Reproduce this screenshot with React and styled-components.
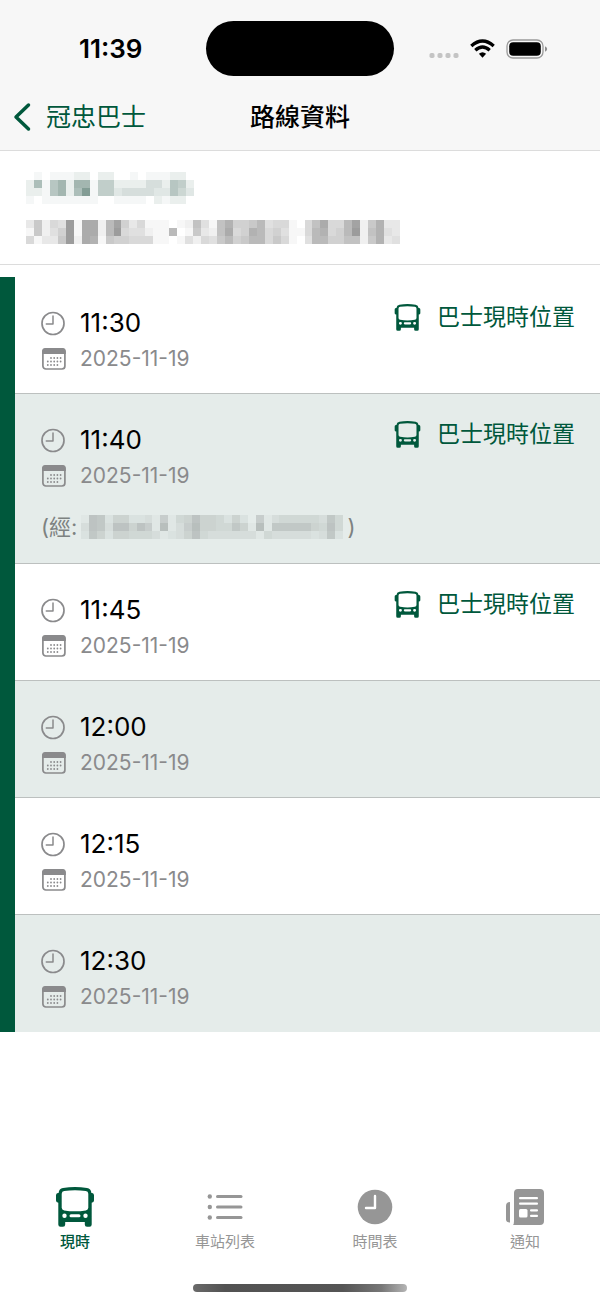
import React from "react";
import styled, { createGlobalStyle } from "styled-components";

const green = "#00583c";
const grey = "#8a8a8c";

const GlobalStyle = createGlobalStyle`
  *, *::before, *::after { box-sizing: border-box; }
  body {
    margin: 0;
    background: #fff;
    color: #000;
    font-family: Inter, "Noto Sans CJK TC", sans-serif;
  }
`;

const Page = styled.div`
  min-height: 100vh;
  display: flex;
  flex-direction: column;
`;

const Header = styled.header`
  background: #f7f7f7;
  border-bottom: 1px solid #dcdcdc;
`;

const StatusBar = styled.div`
  display: grid;
  grid-template-columns: 1fr auto 1fr;
  align-items: center;
  padding: 21px 52px 8px 79px;
`;

const Clock = styled.time`
  font-size: 26px;
  line-height: 30px;
  font-weight: 600;
`;

const Island = styled.div`
  width: 188px;
  height: 55px;
  border-radius: 28px;
  background: #000;
  margin-left: -27px;
`;

const Indicators = styled.div`
  display: flex;
  align-items: center;
  justify-content: flex-end;
  gap: 11px;
`;

const NavBar = styled.nav`
  display: grid;
  grid-template-columns: 1fr auto 1fr;
  align-items: center;
  padding: 0 13px;
  height: 66px;
`;

const BackLink = styled.a`
  display: flex;
  align-items: center;
  gap: 14px;
  color: ${green};
  font-size: 25px;
  line-height: 36px;
  text-decoration: none;
`;

const Title = styled.h1`
  margin: 0;
  font-size: 25px;
  line-height: 36px;
  font-weight: 500;
`;

const RouteSummary = styled.section`
  display: flex;
  flex-direction: column;
  gap: 16px;
  padding: 21px 26px 20px;
  border-bottom: 1px solid #dcdcdc;
`;

const MosaicSvg = styled.svg`
  display: block;
  width: ${(p) => p.$width}px;
  max-width: 100%;
  height: ${(p) => p.$height}px;
`;

const Main = styled.main`
  flex: 1;
`;

const Departures = styled.ul`
  list-style: none;
  margin: 12px 0 0;
  padding: 0;
  border-left: 15px solid ${green};
`;

const Departure = styled.li`
  display: flex;
  justify-content: space-between;
  align-items: flex-start;
  padding: 21px 25px 18px 26px;
  background: #fff;
  border-bottom: 1px solid #bcc0bf;

  &:nth-child(even) { background: #e5ecea; }
  &:last-child { border-bottom-color: transparent; }
`;

const Details = styled.div`
  display: flex;
  flex-direction: column;
`;

const Line = styled.div`
  display: flex;
  align-items: center;
  gap: 14px;
`;

const Time = styled.time`
  font-size: 26px;
  line-height: 40px;
  margin-top: 5px;
`;

const DateText = styled.time`
  font-size: 21px;
  line-height: 32px;
  color: ${grey};
`;

const TimeIcon = styled.svg`
  width: 25px;
  height: 25px;
  margin-top: 5px;
`;

const DateIcon = styled.svg`
  width: 25px;
  height: 25px;
`;

const Via = styled.p`
  display: flex;
  align-items: center;
  gap: 4px;
  margin: 17px 0 0;
  font-size: 22px;
  line-height: 36px;
  color: #7d8281;
`;

const LocateButton = styled.button`
  display: flex;
  align-items: center;
  gap: 16px;
  margin: 0;
  padding: 0;
  border: 0;
  background: none;
  color: ${green};
  font: inherit;
  font-size: 23px;
  line-height: 38px;
  cursor: pointer;
`;

const BusSvg = styled.svg`
  width: ${(p) => p.$size}px;
  height: ${(p) => p.$size}px;
`;

const TabBar = styled.nav`
  display: grid;
  grid-template-columns: repeat(4, 1fr);
  padding-top: 8px;
`;

const Tab = styled.a`
  display: flex;
  flex-direction: column;
  align-items: center;
  color: ${(p) => (p.$active ? green : "#969696")};
  font-size: 15px;
  line-height: 22px;
  font-weight: ${(p) => (p.$active ? 500 : 400)};
  text-decoration: none;
`;

const TabIcon = styled.span`
  display: grid;
  place-items: center;
  height: 44px;
  margin-bottom: 2px;
`;

const HomeIndicator = styled.div`
  width: 214px;
  height: 8px;
  margin: 31px auto 12px;
  border-radius: 4px;
  background: linear-gradient(90deg, #6a6a6a, #525252 15%, #555 70%, #777 88%, #b5b5b5);
`;

/* Each hex digit is the darkness of one block of a hidden name. */
function Mosaic({ rows, color, strength, width, height }) {
  const cols = rows[0].length;
  return (
    <MosaicSvg
      $width={width}
      $height={height}
      viewBox={`0 0 ${cols} ${rows.length}`}
      preserveAspectRatio="none"
      shapeRendering="crispEdges"
      aria-hidden="true"
    >
      {rows.flatMap((row, y) =>
        [...row].map((digit, x) => (
          <rect
            key={`${x}-${y}`}
            x={x}
            y={y}
            width="1"
            height="1"
            fill={color}
            fillOpacity={parseInt(digit, 16) * strength}
          />
        ))
      )}
    </MosaicSvg>
  );
}

const BusIcon = ({ size }) => (
  <BusSvg $size={size} viewBox="0 0 40 40" fill="currentColor" aria-hidden="true">
    <path
      fillRule="evenodd"
      d="M8 1Q20-.8 32 1Q36 1.700 36.400 6H37.200Q39 6.400 39 8.200V13.600Q39 15.500 36.700 15.700V37.500Q36.700 39.800 34.500 39.800H32Q29.800 39.800 29.800 37.500V35H10.200V37.500Q10.200 39.800 8 39.800H5.500Q3.300 39.800 3.300 37.500V15.700Q1 15.500 1 13.600V8.200Q1 6.400 2.800 6H3.600Q4 1.700 8 1ZM9.200 4Q6.800 4.300 6.700 6.800V20.800Q6.800 23 9.200 23.400Q20 25.200 30.800 23.400Q33.200 23 33.300 20.800V6.800Q33.200 4.300 30.800 4Q20 2.500 9.200 4ZM9.500 26.500A2.200 2.200 0 1 0 9.500 30.900A2.200 2.200 0 1 0 9.500 26.500ZM30.500 26.500A2.200 2.200 0 1 0 30.500 30.900A2.200 2.200 0 1 0 30.500 26.500ZM16 27.200A1.500 1.500 0 0 0 16 30.200H24A1.500 1.500 0 0 0 24 27.200Z"
    />
  </BusSvg>
);

const ClockOutline = () => (
  <TimeIcon viewBox="0 0 25 25" fill="none" stroke={grey} strokeLinecap="round" strokeLinejoin="round" aria-hidden="true">
    <circle cx="12" cy="12.500" r="11" strokeWidth="1.700" />
    <path d="M12 5V13H5.300" strokeWidth="1.500" />
  </TimeIcon>
);

const dots = [
  [10, 11], [13.200, 11], [16.400, 11], [19.600, 11],
  [6.800, 14.500], [10, 14.500], [13.200, 14.500], [16.400, 14.500], [19.600, 14.500],
  [6.800, 18], [10, 18], [13.200, 18], [16.400, 18],
];

const CalendarIcon = () => (
  <DateIcon viewBox="0 0 25 25" aria-hidden="true">
    <rect x="1.900" y="2" width="22" height="20" rx="3" fill="none" stroke={grey} strokeWidth="1.700" />
    <path d="M1 7V4.500Q1 1.100 4.500 1.100H21.500Q24.800 1.100 24.800 4.500V7Z" fill={grey} />
    {dots.map(([x, y]) => (
      <circle key={`${x}-${y}`} cx={x} cy={y} r=".9" fill={grey} />
    ))}
  </DateIcon>
);

const BackIcon = () => (
  <svg width="19" height="30" viewBox="0 0 19 30" fill="none" stroke="currentColor" strokeWidth="3.500" strokeLinecap="round" strokeLinejoin="round" aria-hidden="true">
    <path d="M15.500 3L3 15L15.500 27" />
  </svg>
);

const SignalIcon = () => (
  <svg width="30" height="20" viewBox="0 0 30 20" fill="#c4c4c4" aria-hidden="true">
    {[3, 11, 19, 27].map((x) => (
      <rect key={x} x={x - 2.5} y="14" width="5" height="5" rx="1.800" />
    ))}
  </svg>
);

const WifiIcon = () => (
  <svg width="25" height="20" viewBox="0 0 25 20" fill="none" stroke="#000" strokeWidth="3.300" aria-hidden="true">
    <path d="M1.300 7Q12.500-3 23.700 7" />
    <path d="M5.300 11.300Q12.500 4.800 19.700 11.300" />
    <path d="M8.900 14.800Q12.500 11.800 16.100 14.800L12.500 18.800Z" fill="#000" stroke="none" />
  </svg>
);

const BatteryIcon = () => (
  <svg width="42" height="20" viewBox="0 0 42 20" aria-hidden="true">
    <rect x="1" y="1" width="36" height="18" rx="6" fill="none" stroke="#9a9a9a" strokeWidth="1.300" />
    <rect x="3.200" y="3.200" width="31.600" height="13.600" rx="4" />
    <path d="M39 7.300Q41.200 8.300 41.200 10T39 12.700Z" fill="#8d8d8d" />
  </svg>
);

const ListIcon = () => (
  <svg width="36" height="28" viewBox="0 0 36 28" fill="currentColor" aria-hidden="true">
    {[3.500, 14, 24.500].map((y) => (
      <g key={y}>
        <circle cx="2.800" cy={y} r="2.200" />
        <rect x="9" y={y - 1.5} width="26.500" height="3" rx="1.500" />
      </g>
    ))}
  </svg>
);

const ClockSolid = () => (
  <svg width="36" height="36" viewBox="0 0 36 36" aria-hidden="true">
    <circle cx="18" cy="18" r="17.300" fill="currentColor" />
    <path d="M18 7V19H9" fill="none" stroke="#fff" strokeWidth="2.400" strokeLinecap="round" strokeLinejoin="round" />
  </svg>
);

const NewsIcon = () => (
  <svg width="38" height="38" viewBox="0 0 38 38" aria-hidden="true">
    <path d="M4 14V34.500Q0 34.500 0 31.500V18Q0 14 4 14Z" fill="currentColor" />
    <path d="M7 37Q8 36 8 33V5Q8 1 12 1H34Q38 1 38 5V33Q38 37 34 37Z" fill="currentColor" />
    <g fill="#fff">
      <rect x="13" y="9" width="19" height="2.200" rx="1" />
      <rect x="13" y="14.500" width="19" height="2.200" rx="1" />
      <rect x="13" y="21" width="8.500" height="8.500" rx="1.500" />
      <rect x="24" y="21.300" width="8" height="2.200" rx="1" />
      <rect x="24" y="26.800" width="8" height="2.200" rx="1" />
    </g>
  </svg>
);

const stopRows = [
  "010111220220010111220",
  "281792991662222442762",
  "2217928c1663444433753",
  "101111111001111021220",
];

const routeRows = [
  "37254d1bb29c6351110128418a66794551058b559c27a33",
  "17246d1bb29d5442119017328b56a95641159a569d28a43",
  "51337d2ba17665551101425479679957510499668827a34",
];

const viaRows = [
  "187255223161458554252061344444374",
  "387388586191369554475191777775484",
  "275255444312358433333314333332372",
];

const departures = [
  { time: "11:30", live: true },
  { time: "11:40", live: true, via: true },
  { time: "11:45", live: true },
  { time: "12:00" },
  { time: "12:15" },
  { time: "12:30" },
];

const tabs = [
  { label: "現時", icon: <BusIcon size={40} />, active: true },
  { label: "車站列表", icon: <ListIcon /> },
  { label: "時間表", icon: <ClockSolid /> },
  { label: "通知", icon: <NewsIcon /> },
];

export default function App() {
  return (
    <Page>
      <GlobalStyle />
      <Header>
        <StatusBar>
          <Clock>11:39</Clock>
          <Island />
          <Indicators>
            <SignalIcon />
            <WifiIcon />
            <BatteryIcon />
          </Indicators>
        </StatusBar>
        <NavBar>
          <BackLink href="#back">
            <BackIcon />
            冠忠巴士
          </BackLink>
          <Title>路線資料</Title>
        </NavBar>
      </Header>

      <RouteSummary>
        <Mosaic rows={stopRows} color="#1a4a3c" strength={0.045} width={168} height={32} />
        <Mosaic rows={routeRows} color="#000" strength={0.03} width={374} height={24} />
      </RouteSummary>

      <Main>
        <Departures>
          {departures.map(({ time, live, via }) => (
            <Departure key={time}>
              <Details>
                <Line>
                  <ClockOutline />
                  <Time>{time}</Time>
                </Line>
                <Line>
                  <CalendarIcon />
                  <DateText>2025-11-19</DateText>
                </Line>
                {via && (
                  <Via>
                    <span>(經:</span>
                    <Mosaic rows={viaRows} color="#1c2422" strength={0.025} width={262} height={24} />
                    <span>)</span>
                  </Via>
                )}
              </Details>
              {live && (
                <LocateButton type="button">
                  <BusIcon size={27} />
                  巴士現時位置
                </LocateButton>
              )}
            </Departure>
          ))}
        </Departures>
      </Main>

      <TabBar>
        {tabs.map(({ label, icon, active }) => (
          <Tab key={label} href={`#${label}`} $active={active} aria-current={active ? "page" : undefined}>
            <TabIcon>{icon}</TabIcon>
            {label}
          </Tab>
        ))}
      </TabBar>
      <HomeIndicator />
    </Page>
  );
}
